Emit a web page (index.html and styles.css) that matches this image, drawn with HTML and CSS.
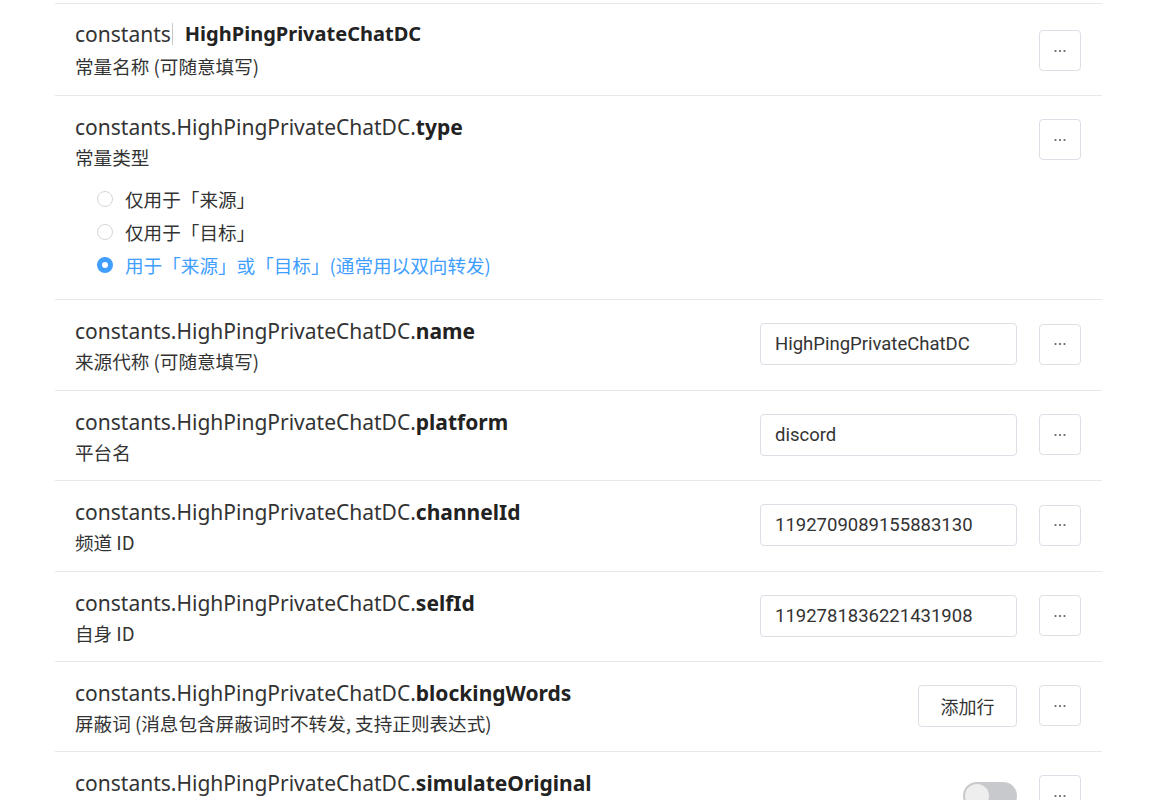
FILE: index.html
```html
<!DOCTYPE html>
<html lang="zh-CN">
<head>
    <meta charset="UTF-8">
    <title>constants</title>
    <link rel="stylesheet" href="styles.css">
</head>
<body>
    <div class="list">
        <!-- const name -->
        <div class="row first">
            <div class="head">
                <div class="info">
                    <div class="title">constants<span class="caret"></span><b class="edit">HighPingPrivateChatDC</b></div>
                    <div class="desc">常量名称 (可随意填写)</div>
                </div>
                <div class="controls">
                    <button class="more" type="button"><svg width="14" height="4" viewBox="0 0 14 4"><circle cx="2.5" cy="2" r="1.1"/><circle cx="7" cy="2" r="1.1"/><circle cx="11.5" cy="2" r="1.1"/></svg></button>
                </div>
            </div>
        </div>

        <!-- type -->
        <div class="row">
            <div class="head">
                <div class="info">
                    <div class="title">constants.HighPingPrivateChatDC.<b>type</b></div>
                    <div class="desc">常量类型</div>
                </div>
                <div class="controls">
                    <button class="more" type="button"><svg width="14" height="4" viewBox="0 0 14 4"><circle cx="2.5" cy="2" r="1.1"/><circle cx="7" cy="2" r="1.1"/><circle cx="11.5" cy="2" r="1.1"/></svg></button>
                </div>
            </div>
            <div class="radios">
                <label class="radio"><span class="dot"></span>仅用于「来源」</label>
                <label class="radio"><span class="dot"></span>仅用于「目标」</label>
                <label class="radio checked"><span class="dot"></span>用于「来源」或「目标」(通常用以双向转发)</label>
            </div>
        </div>

        <div class="row">
            <div class="head">
                <div class="info">
                    <div class="title">constants.HighPingPrivateChatDC.<b>name</b></div>
                    <div class="desc">来源代称 (可随意填写)</div>
                </div>
                <div class="controls">
                    <input class="field" value="HighPingPrivateChatDC">
                    <button class="more" type="button"><svg width="14" height="4" viewBox="0 0 14 4"><circle cx="2.5" cy="2" r="1.1"/><circle cx="7" cy="2" r="1.1"/><circle cx="11.5" cy="2" r="1.1"/></svg></button>
                </div>
            </div>
        </div>

        <div class="row">
            <div class="head">
                <div class="info">
                    <div class="title">constants.HighPingPrivateChatDC.<b>platform</b></div>
                    <div class="desc">平台名</div>
                </div>
                <div class="controls">
                    <input class="field" value="discord">
                    <button class="more" type="button"><svg width="14" height="4" viewBox="0 0 14 4"><circle cx="2.5" cy="2" r="1.1"/><circle cx="7" cy="2" r="1.1"/><circle cx="11.5" cy="2" r="1.1"/></svg></button>
                </div>
            </div>
        </div>

        <div class="row">
            <div class="head">
                <div class="info">
                    <div class="title">constants.HighPingPrivateChatDC.<b>channelId</b></div>
                    <div class="desc">频道 ID</div>
                </div>
                <div class="controls">
                    <input class="field" value="1192709089155883130">
                    <button class="more" type="button"><svg width="14" height="4" viewBox="0 0 14 4"><circle cx="2.5" cy="2" r="1.1"/><circle cx="7" cy="2" r="1.1"/><circle cx="11.5" cy="2" r="1.1"/></svg></button>
                </div>
            </div>
        </div>

        <div class="row">
            <div class="head">
                <div class="info">
                    <div class="title">constants.HighPingPrivateChatDC.<b>selfId</b></div>
                    <div class="desc">自身 ID</div>
                </div>
                <div class="controls">
                    <input class="field" value="1192781836221431908">
                    <button class="more" type="button"><svg width="14" height="4" viewBox="0 0 14 4"><circle cx="2.5" cy="2" r="1.1"/><circle cx="7" cy="2" r="1.1"/><circle cx="11.5" cy="2" r="1.1"/></svg></button>
                </div>
            </div>
        </div>

        <div class="row">
            <div class="head">
                <div class="info">
                    <div class="title">constants.HighPingPrivateChatDC.<b>blockingWords</b></div>
                    <div class="desc">屏蔽词 (消息包含屏蔽词时不转发, 支持正则表达式)</div>
                </div>
                <div class="controls">
                    <button class="add" type="button">添加行</button>
                    <button class="more" type="button"><svg width="14" height="4" viewBox="0 0 14 4"><circle cx="2.5" cy="2" r="1.1"/><circle cx="7" cy="2" r="1.1"/><circle cx="11.5" cy="2" r="1.1"/></svg></button>
                </div>
            </div>
        </div>

        <div class="row">
            <div class="head">
                <div class="info">
                    <div class="title">constants.HighPingPrivateChatDC.<b>simulateOriginal</b></div>
                </div>
                <div class="controls">
                    <span class="switch"><span class="knob"></span></span>
                    <button class="more" type="button"><svg width="14" height="4" viewBox="0 0 14 4"><circle cx="2.5" cy="2" r="1.1"/><circle cx="7" cy="2" r="1.1"/><circle cx="11.5" cy="2" r="1.1"/></svg></button>
                </div>
            </div>
        </div>
    </div>
</body>
</html>
```

FILE: styles.css
```css
body {
    margin: 0;
    background-color: white;
    color: #333333;
    font-family: "Noto Sans", "Noto Sans CJK SC", sans-serif;
    overflow: hidden;
}
.list {
    margin: 3px 0 0 55px;
    width: 1047px;
    border-top: 1px solid #e8e8e8;
}
.row {
    border-bottom: 1px solid #e8e8e8;
    padding: 16px 21px 15.4px 20px;
}
.row.first {
    padding-top: 15px;
    padding-bottom: 16px;
}
.row.first .desc {
    margin-top: 4px;
}
.row.first .controls {
    margin-top: 11px;
}
.head {
    display: flex;
    justify-content: space-between;
    align-items: flex-start;
}
.title {
    font-size: 21px;
    line-height: 30px;
    color: #333333;
    display: flex;
    align-items: center;
}
.title b {
    font-weight: bold;
    color: #222222;
}
.title .edit {
    font-size: 20px;
}
.caret {
    display: inline-block;
    width: 1px;
    height: 22px;
    background-color: #c8c8c8;
    margin: 0 12px 0 1px;
}
.desc {
    font-family: "Noto Sans CJK SC", sans-serif;
    font-size: 18.6px;
    line-height: 26px;
    margin-top: 2px;
}
.controls {
    display: flex;
    align-items: center;
    gap: 22px;
    margin-top: 7px;
}
.more {
    width: 42px;
    height: 41px;
    border: 1px solid #dcdfe6;
    border-radius: 4px;
    background-color: white;
    display: flex;
    align-items: center;
    justify-content: center;
    padding: 0;
    cursor: pointer;
}
.more svg {
    fill: #606266;
}
.field {
    width: 257px;
    height: 42px;
    box-sizing: border-box;
    border: 1px solid #dcdfe6;
    border-radius: 4px;
    padding: 0 14px;
    font-family: Roboto, sans-serif;
    font-size: 18.5px;
    color: #333333;
    outline: none;
}
.add {
    width: 99px;
    height: 42px;
    border: 1px solid #dcdfe6;
    border-radius: 4px;
    background-color: white;
    font-family: "Noto Sans CJK SC", sans-serif;
    font-size: 18px;
    color: #333333;
    cursor: pointer;
}
.switch {
    position: relative;
    width: 54px;
    height: 28px;
    border-radius: 14px;
    background-color: #c8c9cc;
}
.knob {
    position: absolute;
    top: 2px;
    left: 2px;
    width: 24px;
    height: 24px;
    border-radius: 50%;
    background-color: #eeeeee;
}
.radios {
    display: flex;
    flex-direction: column;
    margin: 12px 0 3px 22px;
}
.radio {
    display: flex;
    align-items: center;
    height: 33px;
    font-family: "Noto Sans CJK SC", sans-serif;
    font-size: 18.6px;
    color: #333333;
}
.dot {
    box-sizing: border-box;
    width: 16px;
    height: 16px;
    border: 1px solid #d4d6da;
    border-radius: 50%;
    margin-right: 12px;
    background-color: white;
}
.radio.checked {
    color: #409eff;
}
.radio.checked .dot {
    border: 5px solid #409eff;
}
```
